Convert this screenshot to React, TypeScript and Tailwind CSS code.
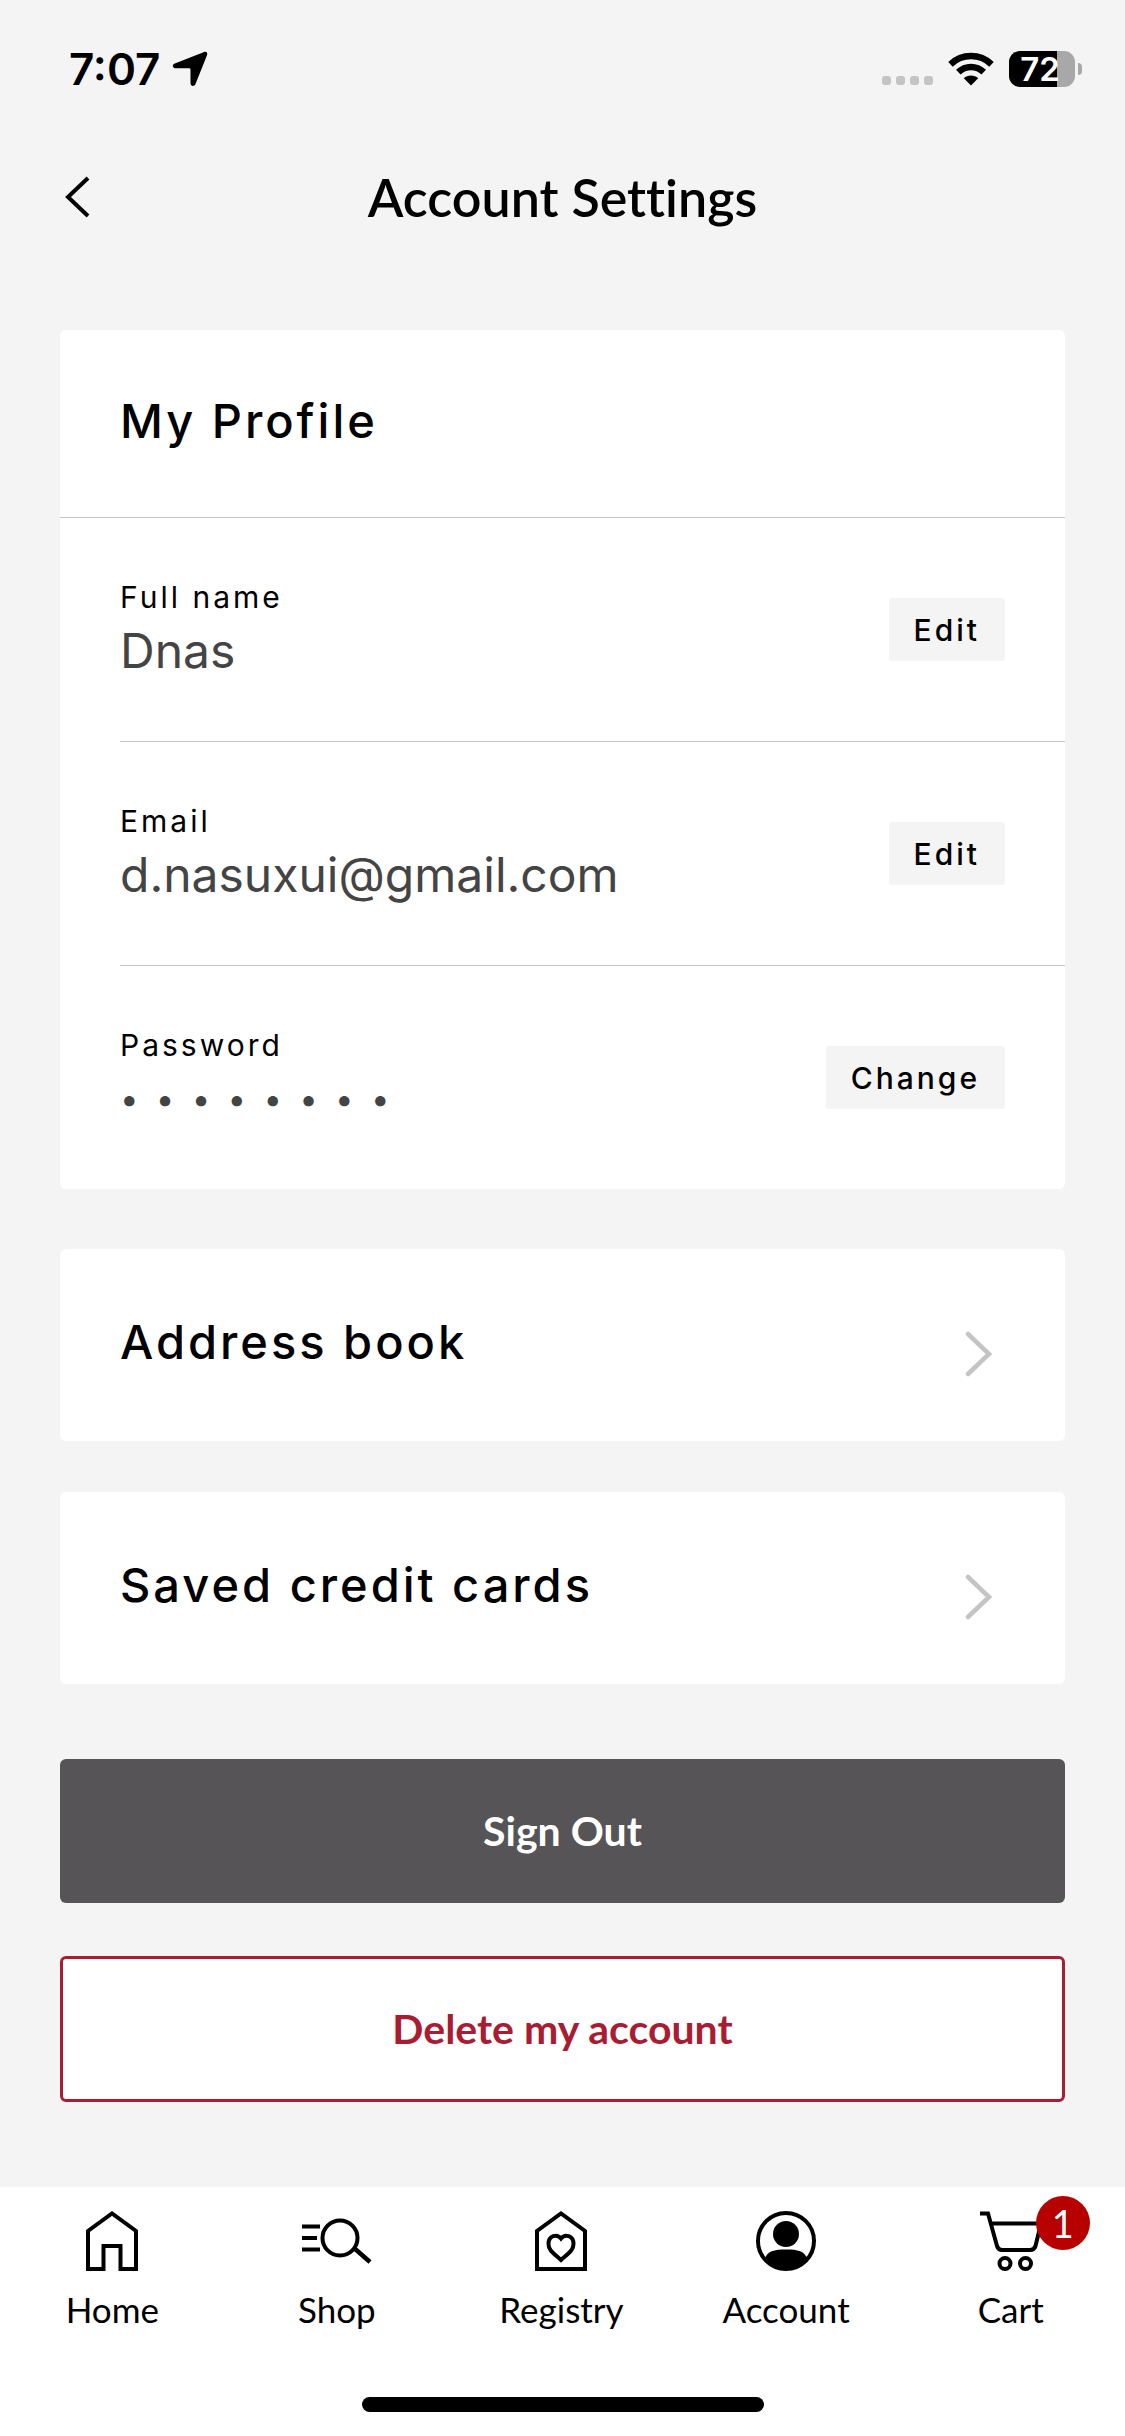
import type { ReactNode } from "react";

// 상단 상태바 (시간, 신호, 와이파이, 배터리)
function StatusBar() {
  return (
    <div className="flex h-[138px] items-center justify-between pr-[43px] pl-[69px]">
      <div className="flex items-center gap-3">
        <span className="text-[44px] leading-[52px] font-semibold">7:07</span>
        <svg width="36" height="36" viewBox="0 0 36 36" aria-hidden="true">
          <path
            d="M31.500 1.200C34.300 0 36 1.700 34.900 4.500L23.500 33C22.300 36 18.500 35.500 18.500 32V19C18.500 17.800 18 17.300 16.800 17.300H4C.300 17.300 -.300 13.800 2.800 12.500Z"
            fill="currentColor"
          />
        </svg>
      </div>

      <div className="flex items-center gap-[15px]">
        <div className="flex gap-[5px] pt-[22px]">
          {[1, 2, 3, 4].map((i) => (
            <span key={i} className="size-[9px] rounded-[3px] bg-[#c4c4c4]" />
          ))}
        </div>
        <svg width="46" height="34" viewBox="0 0 46 34" aria-hidden="true">
          <path d="M23 33.500L15.800 26.300C19.500 22.600 26.500 22.600 30.200 26.300Z" fill="currentColor" />
          <g fill="none" stroke="currentColor" strokeWidth="6.500">
            <path d="M10.300 20.200C17.500 13.200 28.500 13.200 35.700 20.200" />
            <path d="M2.500 12.300C14 1.300 32 1.300 43.500 12.300" />
          </g>
        </svg>
        <div className="flex items-center gap-[3px]">
          <div className="flex h-9 w-[66px] items-center justify-center rounded-[11px] bg-linear-to-r from-black from-[73%] to-[#a8a8a8] to-[73%] pr-1">
            <span className="text-[33px] leading-9 font-semibold text-white">72</span>
          </div>
          <span className="h-3 w-1 rounded-r-full bg-[#a8a8a8]" />
        </div>
      </div>
    </div>
  );
}

function TitleBar() {
  return (
    <header className="grid h-[118px] grid-cols-[100px_1fr_100px] items-center">
      <button type="button" aria-label="Back" className="flex h-full items-center pl-[64px]">
        <svg width="26" height="42" viewBox="0 0 26 42" fill="none" aria-hidden="true">
          <path d="M24 2L4 21L24 40" stroke="currentColor" strokeWidth="4" />
        </svg>
      </button>
      <h1 className="text-center font-['Lato',sans-serif] text-[52px] leading-[64px] font-semibold [font-variant-ligatures:none]">
        Account Settings
      </h1>
    </header>
  );
}

type ProfileRowProps = {
  label: string;
  value: string;
  action: string;
  hidden?: boolean;
};

function ProfileRow({ label, value, action, hidden }: ProfileRowProps) {
  return (
    <div className="ml-[60px] flex h-[224px] items-center justify-between border-b border-[#c4c4c4] pr-[60px] last:h-[223px] last:border-b-0">
      <div className="pt-[6px]">
        <div className="text-[30px] leading-9 tracking-[3px]">{label}</div>
        <div
          className={`leading-[72px] text-[#444444] ${hidden ? "text-[33px] tracking-[4px]" : "text-[48px]"}`}
        >
          {value}
        </div>
      </div>
      <button
        type="button"
        className="h-[63px] rounded-[3px] bg-[#f4f4f4] px-[25px] text-[30px] leading-9 font-medium tracking-[3px]"
      >
        {action}
      </button>
    </div>
  );
}

function LinkCard({ title }: { title: string }) {
  return (
    <a href="#" className="flex h-[192px] items-center justify-between rounded-md bg-white pr-[72px] pl-[60px]">
      <span className="pb-[6px] text-[47px] leading-[60px] font-medium tracking-[3px]">{title}</span>
      <svg className="mt-[18px]" width="28" height="46" viewBox="0 0 28 46" fill="none" aria-hidden="true">
        <path d="M3 3L24 23L3 43" stroke="#c4c4c4" strokeWidth="4.500" strokeLinecap="round" />
      </svg>
    </a>
  );
}

function TabItem({ label, children }: { label: string; children: ReactNode }) {
  return (
    <a href="#" className="flex flex-1 flex-col items-center gap-[14px]">
      {children}
      <span className="font-['Lato',sans-serif] text-[35px] leading-[44px]">{label}</span>
    </a>
  );
}

const iconProps = {
  height: 62,
  fill: "none",
  stroke: "currentColor",
  strokeWidth: 4,
  "aria-hidden": true,
} as const;

function TabBar() {
  return (
    <footer className="bg-white">
      <nav className="flex h-[210px] pt-6 pr-[2px]">
        <TabItem label="Home">
          <svg {...iconProps} width="54" viewBox="0 0 54 62">
            <path d="M3 58V20L27 2.500L51 20V58H35.500V35H18.500V58Z" />
          </svg>
        </TabItem>
        <TabItem label="Shop">
          <svg {...iconProps} width="70" viewBox="0 0 70 62">
            <path d="M0 15.500H18M0 27H15M0 38.500H18" />
            <circle cx="38" cy="27" r="17.500" />
            <path d="M52 37L68 51" strokeWidth="4.500" />
          </svg>
        </TabItem>
        <TabItem label="Registry">
          <svg {...iconProps} width="54" viewBox="0 0 54 62">
            <path d="M3 58V20L27 2.500L51 20V58Z" />
            <path d="M27 27.500C23 22.500 14.500 24.500 14.500 33C14.500 39.500 20 42.500 27 49C34 42.500 39.500 39.500 39.500 33C39.500 24.500 31 22.500 27 27.500Z" />
          </svg>
        </TabItem>
        <TabItem label="Account">
          <svg {...iconProps} width="62" viewBox="0 0 62 62">
            <circle cx="31" cy="30" r="28" />
            <circle cx="31" cy="23" r="13" fill="currentColor" stroke="none" />
            <path
              d="M10 48C12 40 19 38.500 31 38.500S50 40 52 48C40 63 22 63 10 48Z"
              fill="currentColor"
              stroke="none"
            />
          </svg>
        </TabItem>
        <TabItem label="Cart">
          <div className="relative">
            <svg {...iconProps} width="62" viewBox="0 0 62 62">
              <path d="M0 2.500H8L17 35C18 38 19.500 39 22 39H50C53 39 54.500 38 55.500 35L61 12.500H11" />
              <circle cx="25" cy="52.500" r="5.500" />
              <circle cx="45.500" cy="52.500" r="5.500" />
            </svg>
            <span className="absolute -top-[15px] left-[56px] flex size-[54px] items-center justify-center rounded-full bg-[#b70000] font-['Lato',sans-serif] text-[38px] leading-none text-white">
              1
            </span>
          </div>
        </TabItem>
      </nav>
      <div className="flex h-[39px] justify-center">
        <span className="h-[15px] w-[402px] rounded-full bg-black" />
      </div>
    </footer>
  );
}

export default function App() {
  return (
    <div className="flex min-h-screen flex-col bg-[#f4f4f4] font-['Inter','Liberation_Sans',sans-serif] text-black">
      <StatusBar />
      <TitleBar />

      <main className="flex flex-1 flex-col px-[60px] pt-[74px]">
        {/* 프로필 */}
        <section className="rounded-md bg-white">
          <h2 className="flex h-[188px] items-center border-b border-[#c4c4c4] pb-[6px] pl-[60px] text-[47px] leading-[60px] font-medium tracking-[3px]">
            My Profile
          </h2>
          <ProfileRow label="Full name" value="Dnas" action="Edit" />
          <ProfileRow label="Email" value="d.nasuxui@gmail.com" action="Edit" />
          <ProfileRow label="Password" value="• • • • • • • •" action="Change" hidden />
        </section>

        <div className="mt-[60px] flex flex-col gap-[51px]">
          <LinkCard title="Address book" />
          <LinkCard title="Saved credit cards" />
        </div>

        {/* 계정 버튼 */}
        <div className="mt-[75px] mb-[85px] flex flex-col gap-[53px] font-['Lato',sans-serif] text-[41px] leading-[48px] font-bold">
          <button type="button" className="h-36 rounded-md bg-[#565456] text-white">
            Sign Out
          </button>
          <button type="button" className="h-[146px] rounded-md border-[3px] border-[#a91c32] bg-white text-[#a91c32]">
            Delete my account
          </button>
        </div>
      </main>

      <TabBar />
    </div>
  );
}
